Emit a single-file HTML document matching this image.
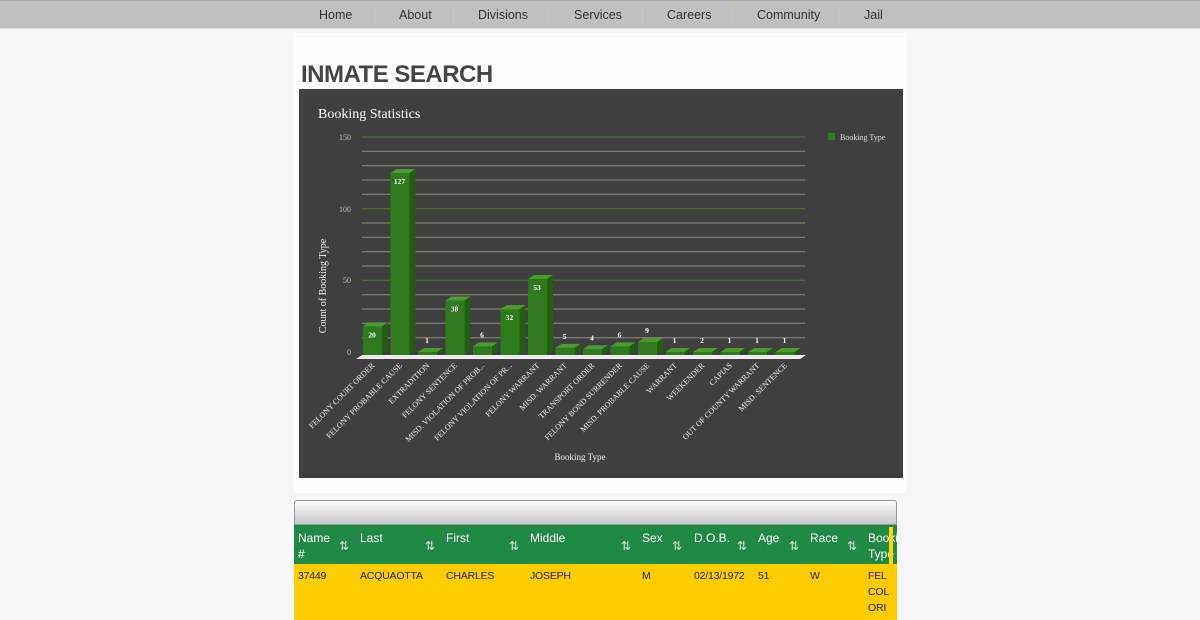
<!DOCTYPE html>
<html><head><style>
body{margin:0;background:#f7f7f7;font-family:"Liberation Sans",sans-serif;width:1200px;height:620px;overflow:hidden;position:relative}
.nav{position:absolute;top:0;left:0;width:1200px;height:27px;background:#c0c0c0;border-top:1px solid #aaa;border-bottom:1px solid #ddd}
.nav span{position:absolute;top:7px;font-size:12.5px;color:#333}
.nav i{position:absolute;top:5px;width:1px;height:18px;background:#cbc7a8}
.main{position:absolute;left:294px;top:33px;width:612px;height:460px;background:#fdfdfd}
h1{position:absolute;left:301px;top:61px;margin:0;font-size:24px;font-weight:bold;color:#444;letter-spacing:-0.5px}
.tb{position:absolute;left:294px;top:500px;width:603px;height:120px;overflow:hidden}
.bar{height:23px;background:linear-gradient(#fafafa,#c8c8c8);border:1px solid #999;border-radius:3px 3px 0 0}
.hd{position:absolute;top:25px;left:0;width:603px;height:39px;background:#1f8a45;color:#fff;font-size:12px}
.row{position:absolute;top:64px;left:0;width:603px;height:60px;background:#ffcc00;color:#222;font-size:10.5px;letter-spacing:-0.2px}
.hd span,.row span{position:absolute;line-height:16px}
.hd b{position:absolute;top:14px;font-weight:normal;font-size:12px;color:#ddd}
</style></head><body>
<div class="nav">
<span style="left:319px">Home</span><i style="left:374px"></i>
<span style="left:399px">About</span><i style="left:453px"></i>
<span style="left:478px">Divisions</span><i style="left:548px"></i>
<span style="left:574px">Services</span><i style="left:642px"></i>
<span style="left:667px">Careers</span><i style="left:732px"></i>
<span style="left:757px">Community</span><i style="left:838px"></i>
<span style="left:864px">Jail</span>
</div>
<div class="main"></div>
<h1>INMATE SEARCH</h1>
<svg style="position:absolute;left:299px;top:89px" width="604" height="389" viewBox="299 89 604 389" font-family="Liberation Serif,serif">
<rect x="299" y="89" width="604" height="389" fill="#404040"/>
<text x="318" y="118" fill="#fff" font-size="14">Booking Statistics</text>
<rect x="828" y="133" width="7" height="7" fill="#2e7d1e"/>
<text x="840" y="140" fill="#ddd" font-size="8">Booking Type</text>
<g stroke="#8a8a7a" stroke-width="1">
<line x1="362" x2="805" y1="137" y2="137" stroke="#4f7a2a"/>
<line x1="362" x2="805" y1="151.3" y2="151.3"/><line x1="362" x2="805" y1="165.7" y2="165.7"/><line x1="362" x2="805" y1="180" y2="180"/><line x1="362" x2="805" y1="194.3" y2="194.3"/><line x1="362" x2="805" y1="208.7" y2="208.7" stroke="#4f7a2a"/><line x1="362" x2="805" y1="223" y2="223"/><line x1="362" x2="805" y1="237.3" y2="237.3"/><line x1="362" x2="805" y1="251.7" y2="251.7"/><line x1="362" x2="805" y1="266" y2="266"/><line x1="362" x2="805" y1="280.3" y2="280.3" stroke="#4f7a2a"/><line x1="362" x2="805" y1="294.7" y2="294.7"/><line x1="362" x2="805" y1="309" y2="309"/><line x1="362" x2="805" y1="323.3" y2="323.3"/><line x1="362" x2="805" y1="337.7" y2="337.7"/>
</g>
<g fill="#bbb" font-size="8" text-anchor="end"><text x="351" y="140">150</text><text x="351" y="212">100</text><text x="351" y="283">50</text><text x="351" y="355">0</text></g>
<text transform="translate(326,286) rotate(-90)" fill="#eee" font-size="10" text-anchor="middle">Count of Booking Type</text>
<polygon points="362,355 806,355 800,359 356,359" fill="#eee"/>
<g id="bars"></g>
<text x="580" y="460" fill="#eee" font-size="9" text-anchor="middle">Booking Type</text>
<g id="lbl" fill="#eee" font-size="8" text-anchor="end"></g>
</svg>
<script>
var v=[20,127,1,38,6,32,53,5,4,6,9,1,2,1,1,1];
var n=["FELONY COURT ORDER","FELONY PROBABLE CAUSE","EXTRADITION","FELONY SENTENCE","MISD. VIOLATION OF PROB...","FELONY VIOLATION OF PR...","FELONY WARRANT","MISD. WARRANT","TRANSPORT ORDER","FELONY BOND SURRENDER","MISD. PROBABLE CAUSE","WARRANT","WEEKENDER","CAPIAS","OUT OF COUNTY WARRANT","MISD. SENTENCE"];
var g="",l="";
for(var i=0;i<v.length;i++){var c=372+i*27.5,x=c-9,w=19,b=355,h=Math.max(v[i]*1.433,3),t=b-h;
g+='<rect x="'+x+'" y="'+t+'" width="'+w+'" height="'+h+'" fill="#2f7a1c"/>';
g+='<polygon points="'+x+','+t+' '+(x+w)+','+t+' '+(x+w+6)+','+(t-4)+' '+(x+6)+','+(t-4)+'" fill="#4a9a30"/>';
g+='<polygon points="'+(x+w)+','+t+' '+(x+w+6)+','+(t-4)+' '+(x+w+6)+','+(b-4)+' '+(x+w)+','+b+'" fill="#235e14"/>';
var ty=v[i]>15?t+11:t-9;
g+='<text x="'+c+'" y="'+ty+'" fill="#fff" font-size="7.5" font-weight="bold" text-anchor="middle">'+v[i]+'</text>';
l+='<text transform="translate('+(c+3)+',366) rotate(-45)">'+n[i]+'</text>';}
document.getElementById("bars").innerHTML=g;document.getElementById("lbl").innerHTML=l;
</script>
<div class="tb">
<div class="bar"></div>
<div class="hd">
<span style="left:4px;top:5px">Name<br>#</span><b style="left:45px">⇅</b>
<span style="left:66px;top:5px">Last</span><b style="left:131px">⇅</b>
<span style="left:152px;top:5px">First</span><b style="left:215px">⇅</b>
<span style="left:236px;top:5px">Middle</span><b style="left:327px">⇅</b>
<span style="left:348px;top:5px">Sex</span><b style="left:378px">⇅</b>
<span style="left:400px;top:5px">D.O.B.</span><b style="left:443px">⇅</b>
<span style="left:464px;top:5px">Age</span><b style="left:495px">⇅</b>
<span style="left:516px;top:5px">Race</span><b style="left:553px">⇅</b>
<span style="left:574px;top:5px">Booki<br>Type</span>
<div style="position:absolute;left:595px;top:2px;width:4px;height:37px;background:#ffd400"></div>
</div>
<div class="row">
<span style="left:4px;top:4px">37449</span><span style="left:66px;top:4px">ACQUAOTTA</span><span style="left:152px;top:4px">CHARLES</span><span style="left:236px;top:4px">JOSEPH</span><span style="left:348px;top:4px">M</span><span style="left:400px;top:4px">02/13/1972</span><span style="left:464px;top:4px">51</span><span style="left:516px;top:4px">W</span><span style="left:574px;top:4px">FEL<br>COL<br>ORI</span>
</div>
</div>
</body></html>
